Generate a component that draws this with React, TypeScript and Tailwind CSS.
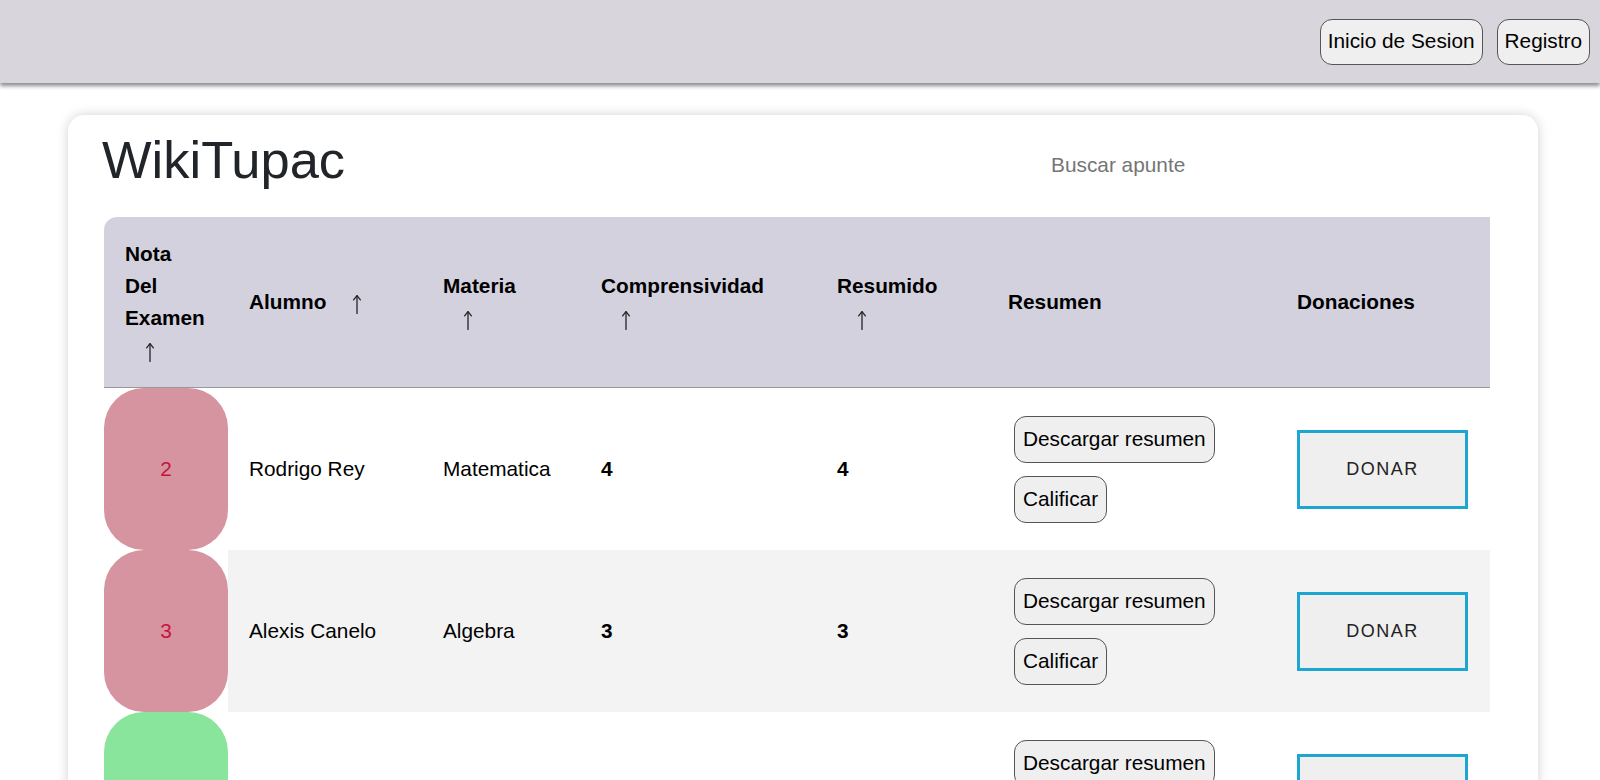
import React from 'react'

type Apunte = {
    nota: number
    alumno: string
    materia: string
    comprensividad: number
    resumido: number
    aprobado: boolean
}

const apuntes: Apunte[] = [
    { nota: 2, alumno: 'Rodrigo Rey', materia: 'Matematica', comprensividad: 4, resumido: 4, aprobado: false },
    { nota: 3, alumno: 'Alexis Canelo', materia: 'Algebra', comprensividad: 3, resumido: 3, aprobado: false },
    { nota: 9, alumno: 'Lucia Gomez', materia: 'Historia', comprensividad: 5, resumido: 5, aprobado: true },
]

// flecha de orden
const Arrow = () => (
    <span className="ml-[19px] mr-[10px] inline-block align-[-5px]">
        <svg width="12" height="20" viewBox="0 0 12 20" fill="none" stroke="#222" strokeWidth="1.3" strokeLinecap="round" strokeLinejoin="round">
            <path d="M6 19.5V2" />
            <path d="M2.6 5.8L6 1.6L9.4 5.8" />
        </svg>
    </span>
)

const App = () => {
    return (
        <div className="min-h-screen bg-white text-[20.8px] text-black" style={{ fontFamily: '"Liberation Sans", Arial, sans-serif' }}>
            <nav className="relative z-10 flex h-[83px] items-center justify-end gap-[14px] bg-[#d8d5dd] pr-[10px] shadow-[0_3px_4px_rgba(0,0,0,0.45)]">
                <button className="h-[46px] rounded-[12px] border border-[#555] bg-[#efefef] px-[7px] leading-none">Inicio de Sesion</button>
                <button className="h-[46px] rounded-[12px] border border-[#555] bg-[#efefef] px-[7px] leading-none">Registro</button>
            </nav>

            <main className="ml-[68px] mt-[32px] w-[1470px] rounded-[16px] bg-white pb-10 pl-[34px] pt-[13px] shadow-[0_0_12px_rgba(0,0,0,0.18)]">
                <div className="flex items-start">
                    <h1 className="text-[52.5px] leading-[1.2] text-[#212529]">WikiTupac</h1>
                    <input
                        placeholder="Buscar apunte"
                        className="ml-[706px] mt-[25px] w-[300px] bg-transparent leading-[24px] outline-none placeholder:text-[#757575]"
                    />
                </div>

                <table className="ml-[2px] mt-[26px] w-[1386px] table-fixed border-separate border-spacing-0">
                    <thead>
                        <tr className="text-left font-bold leading-[32px]">
                            <th className="w-[124px] rounded-tl-[13px] border-b border-[#999] bg-[#d4d1de] px-[21px] py-[21px]">
                                Nota Del Examen <Arrow />
                            </th>
                            <th className="w-[194px] border-b border-[#999] bg-[#d4d1de] px-[21px]">
                                Alumno <Arrow />
                            </th>
                            <th className="w-[158px] border-b border-[#999] bg-[#d4d1de] px-[21px]">
                                Materia <Arrow />
                            </th>
                            <th className="w-[236px] border-b border-[#999] bg-[#d4d1de] px-[21px]">
                                Comprensividad <Arrow />
                            </th>
                            <th className="w-[171px] border-b border-[#999] bg-[#d4d1de] px-[21px]">
                                Resumido <Arrow />
                            </th>
                            <th className="w-[289px] border-b border-[#999] bg-[#d4d1de] px-[21px]">Resumen</th>
                            <th className="w-[214px] border-b border-[#999] bg-[#d4d1de] px-[21px]">Donaciones</th>
                        </tr>
                    </thead>
                    <tbody>
                        {apuntes.map((a, i) => {
                            const bg = i % 2 === 1 ? 'bg-[#f3f3f3]' : 'bg-white'
                            return (
                                <tr key={a.alumno}>
                                    <td className={`h-[162px] rounded-[40px] text-center text-[#c8143c] ${a.aprobado ? 'bg-[#89e49c]' : 'bg-[#d693a0]'}`}>
                                        {a.nota}
                                    </td>
                                    <td className={`${bg} px-[21px]`}>{a.alumno}</td>
                                    <td className={`${bg} px-[21px]`}>{a.materia}</td>
                                    <td className={`${bg} px-[21px] font-bold`}>{a.comprensividad}</td>
                                    <td className={`${bg} px-[21px] font-bold`}>{a.resumido}</td>
                                    <td className={`${bg} px-[21px]`}>
                                        <div className="ml-[6px] flex flex-col items-start gap-[13px]">
                                            <button className="h-[47px] rounded-[12px] border border-[#555] bg-[#efefef] px-[8px] leading-none">Descargar resumen</button>
                                            <button className="h-[47px] rounded-[12px] border border-[#555] bg-[#efefef] px-[8px] leading-none">Calificar</button>
                                        </div>
                                    </td>
                                    <td className={`${bg} px-[21px]`}>
                                        <button className="h-[79px] w-[171px] border-[3px] border-[#1ca6d0] bg-[#efefef] text-[18px] tracking-[1.5px] text-[#222]">DONAR</button>
                                    </td>
                                </tr>
                            )
                        })}
                    </tbody>
                </table>
            </main>
        </div>
    )
}

export default App
